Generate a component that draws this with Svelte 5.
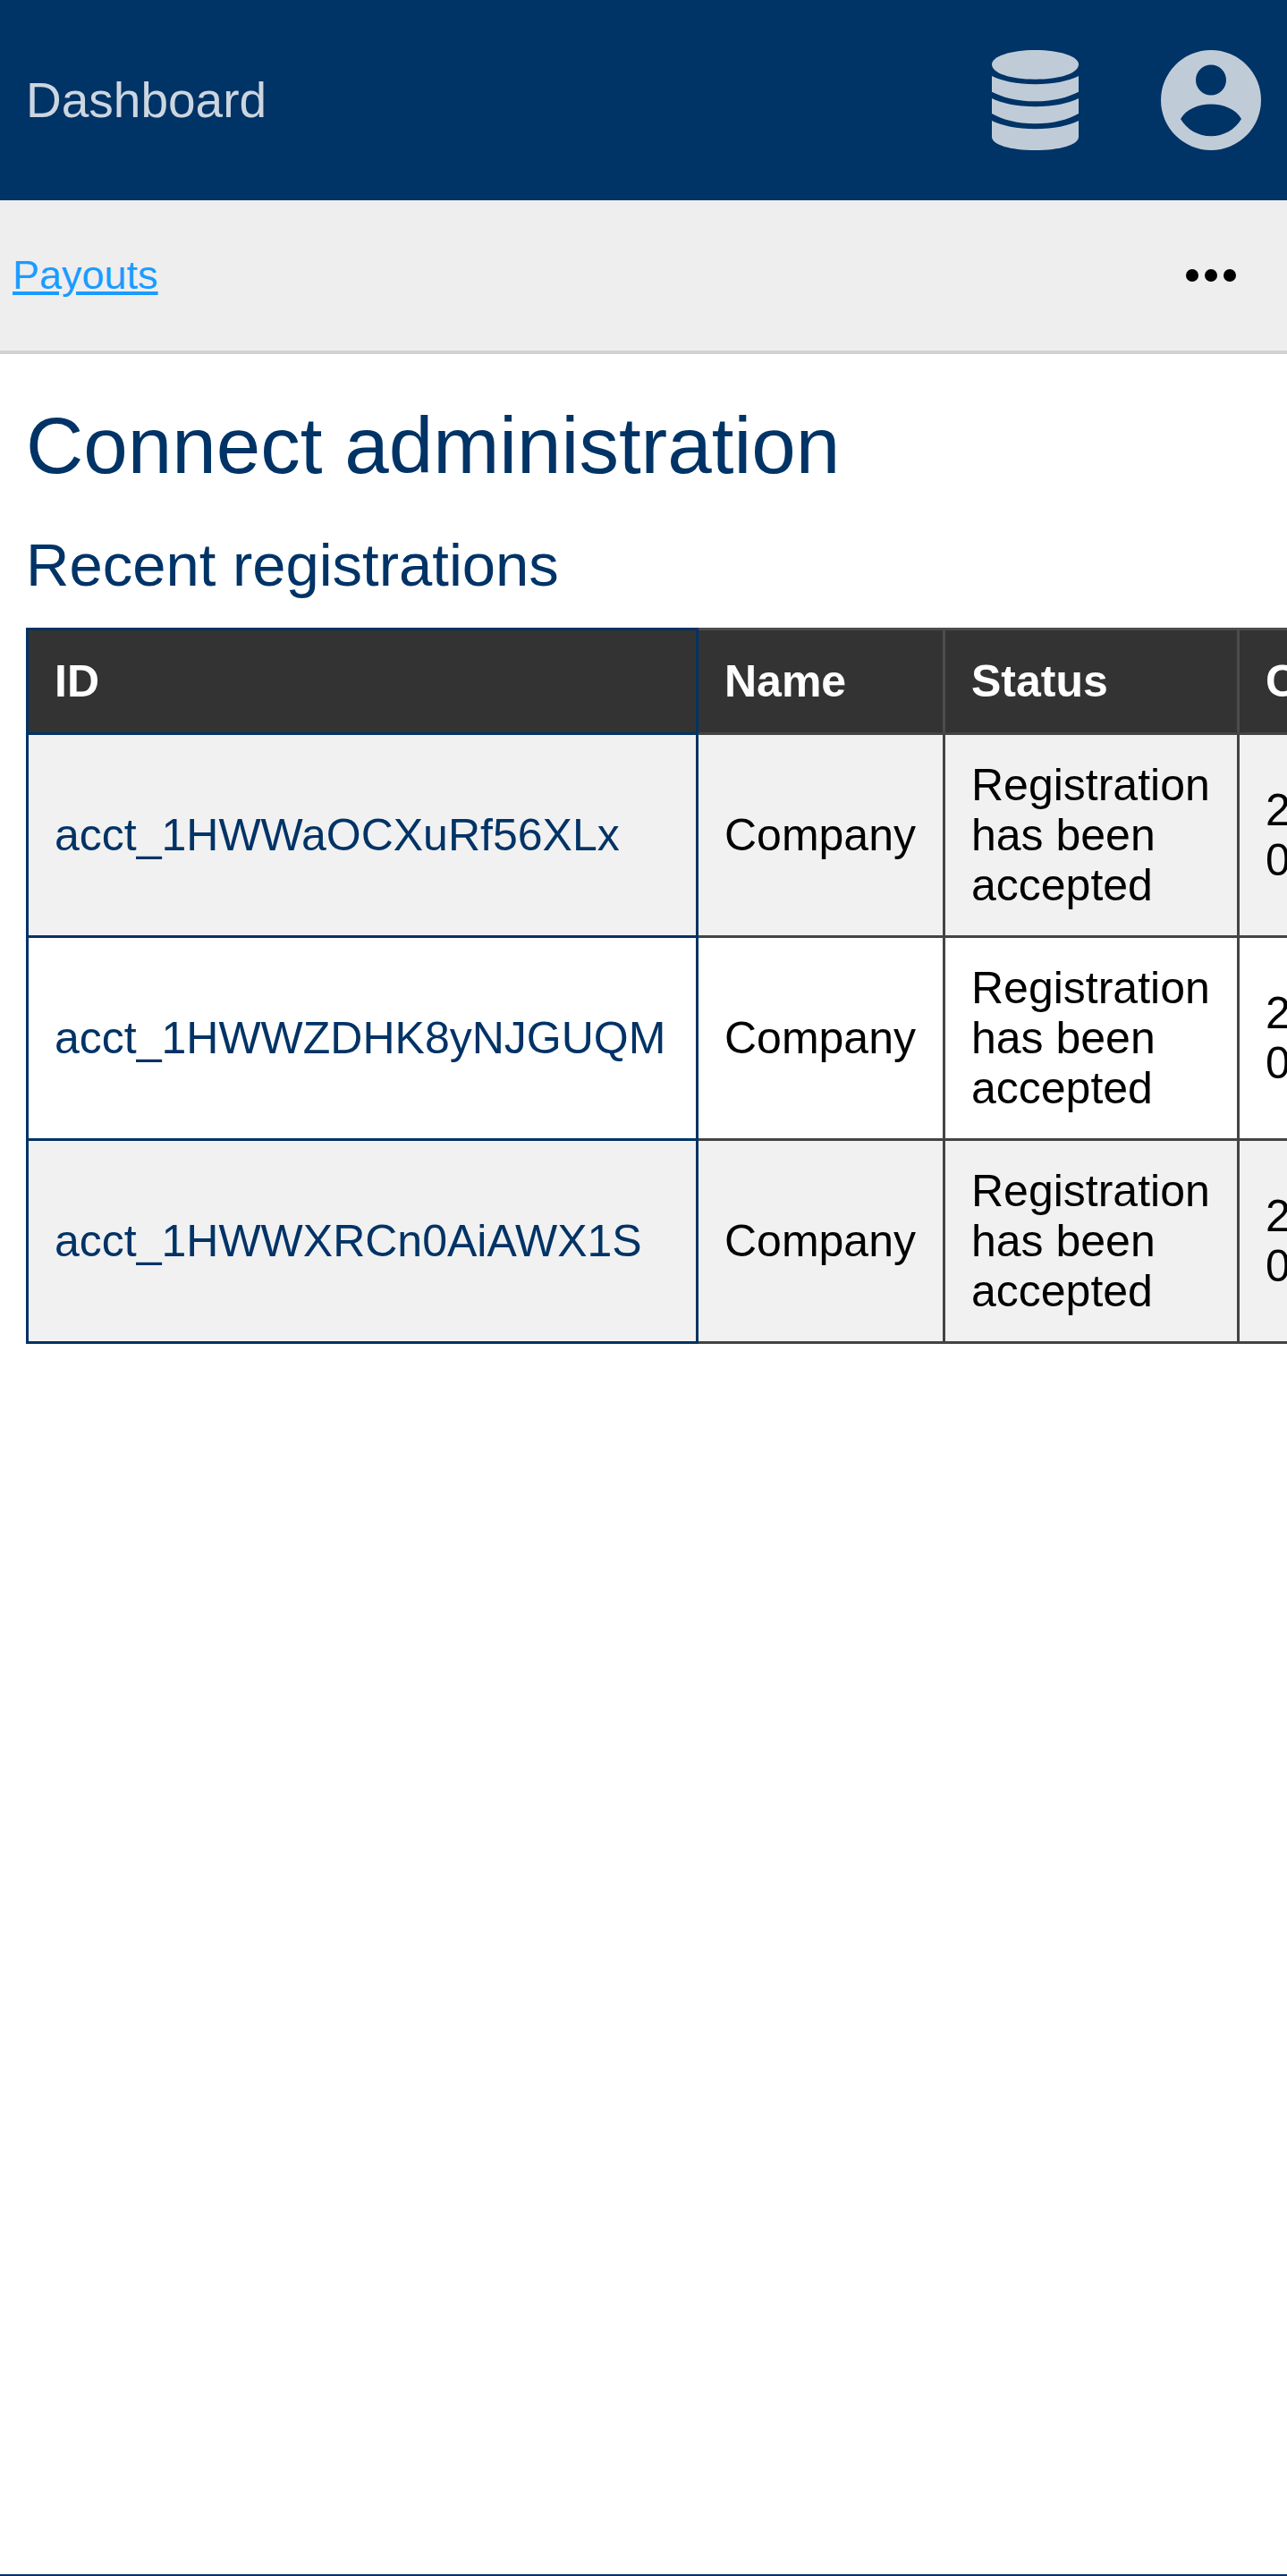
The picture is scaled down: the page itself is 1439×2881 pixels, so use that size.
<script>
  const registrations = [
    { id: 'acct_1HWWaOCXuRf56XLx', name: 'Company', status: 'Registration has been accepted', created: '2020-09-25 09:14' },
    { id: 'acct_1HWWZDHK8yNJGUQM', name: 'Company', status: 'Registration has been accepted', created: '2020-09-25 09:13' },
    { id: 'acct_1HWWXRCn0AiAWX1S', name: 'Company', status: 'Registration has been accepted', created: '2020-09-25 09:11' }
  ];
</script>

<div class="page">
  <header class="topbar">
    <a class="brand" href="#dashboard">Dashboard</a>
    <div class="icons">
      <svg class="db" viewBox="0 0 97 112" width="97" height="112" aria-hidden="true">
        <path d="M0 16C0 7 21 0 48.5 0S97 7 97 16C97 26 76 32.7 48.5 32.7S0 26 0 16Z" />
        <path d="M0 29C11 34.500 28 38.300 48.500 38.300S86 34.500 97 29V46.700C86 52.500 69 57.300 48.500 57.300S11 52.500 0 46.700Z" />
        <path d="M0 54C11 59.500 28 63.300 48.500 63.300S86 59.500 97 54V71C86 77.500 69 82.300 48.500 82.300S11 77.500 0 71Z" />
        <path d="M0 79C11 84.500 28 88.300 48.500 88.300S86 84.500 97 79V97C97 106 76 112 48.500 112S0 106 0 97Z" />
      </svg>
      <svg class="user" viewBox="0 0 112 112" width="112" height="112" aria-hidden="true">
        <path
          fill-rule="evenodd"
          d="M56 0A56 56 0 1 1 56 112A56 56 0 1 1 56 0ZM56 16.500A17 17 0 1 0 56 50.500A17 17 0 1 0 56 16.500ZM22 77C28 66 42 60.500 56 60.500S84 66 90 77C83 89 70 96.300 56 96.300S29 89 22 77Z"
        />
      </svg>
    </div>
  </header>

  <nav class="subnav">
    <a href="#payouts">Payouts</a>
    <button class="more" aria-label="More"><span></span><span></span><span></span></button>
  </nav>

  <main>
    <h1>Connect administration</h1>
    <h2>Recent registrations</h2>
    <div class="table-wrap">
      <table>
        <colgroup>
          <col class="c-id" />
          <col class="c-name" />
          <col class="c-status" />
          <col class="c-created" />
        </colgroup>
        <thead>
          <tr>
            <th>ID</th>
            <th>Name</th>
            <th>Status</th>
            <th>Created</th>
          </tr>
        </thead>
        <tbody>
          {#each registrations as reg}
            <tr>
              <td><a href="#account">{reg.id}</a></td>
              <td>{reg.name}</td>
              <td>{reg.status}</td>
              <td>{reg.created}</td>
            </tr>
          {/each}
        </tbody>
      </table>
    </div>
  </main>

  <footer></footer>
</div>

<style>
  :global(body) {
    margin: 0;
    background: #fff;
    font-family: "Liberation Sans", Arial, sans-serif;
  }

  .page {
    display: flex;
    flex-direction: column;
    min-height: 2881px;
    overflow: hidden;
  }

  .topbar {
    display: flex;
    align-items: center;
    justify-content: space-between;
    height: 224px;
    padding: 0 29px;
    background: #003366;
  }

  .brand {
    color: #ccd6e0;
    font-size: 55px;
    text-decoration: none;
  }

  .icons {
    display: flex;
    align-items: center;
    gap: 92px;
  }

  .icons svg {
    display: block;
    fill: #bfccd8;
  }

  .subnav {
    display: flex;
    align-items: center;
    justify-content: space-between;
    height: 168px;
    padding: 0 57px 0 14px;
    background: #eeeeee;
    border-bottom: 4px solid #d2d2d2;
  }

  .subnav a {
    color: #1a9cff;
    font-size: 45px;
  }

  .more {
    display: flex;
    gap: 7px;
    padding: 0;
    border: none;
    background: none;
  }

  .more span {
    width: 14px;
    height: 14px;
    border-radius: 50%;
    background: #000;
  }

  main {
    flex: 1;
    padding: 0 0 0 29px;
  }

  h1 {
    margin: 52px 0 0;
    color: #003366;
    font-size: 89px;
    font-weight: 400;
    line-height: 100px;
  }

  h2 {
    margin: 44px 0 0;
    color: #003366;
    font-size: 67px;
    font-weight: 400;
    line-height: 80px;
  }

  .table-wrap {
    margin-top: 30px;
    overflow: hidden;
  }

  table {
    width: 1754px;
    table-layout: fixed;
    border-collapse: collapse;
    font-size: 50px;
    line-height: 56px;
  }

  .c-id { width: 749px; }
  .c-name { width: 276px; }
  .c-status { width: 329px; }
  .c-created { width: 400px; }

  th,
  td {
    padding: 28px 29px;
    text-align: left;
    border: 3px solid #444;
  }

  th {
    height: 56px;
    padding: 29px;
    background: #333;
    color: #fff;
    border-color: #4c4c4c;
    border-bottom-color: #444;
  }

  td {
    color: #000;
    vertical-align: middle;
  }

  tbody tr:nth-child(odd) td {
    background: #f1f1f1;
  }

  th:first-child,
  td:first-child {
    border-color: #003366;
  }

  td a {
    color: #003366;
    text-decoration: none;
  }

  footer {
    height: 2px;
    background: #003366;
  }
</style>
